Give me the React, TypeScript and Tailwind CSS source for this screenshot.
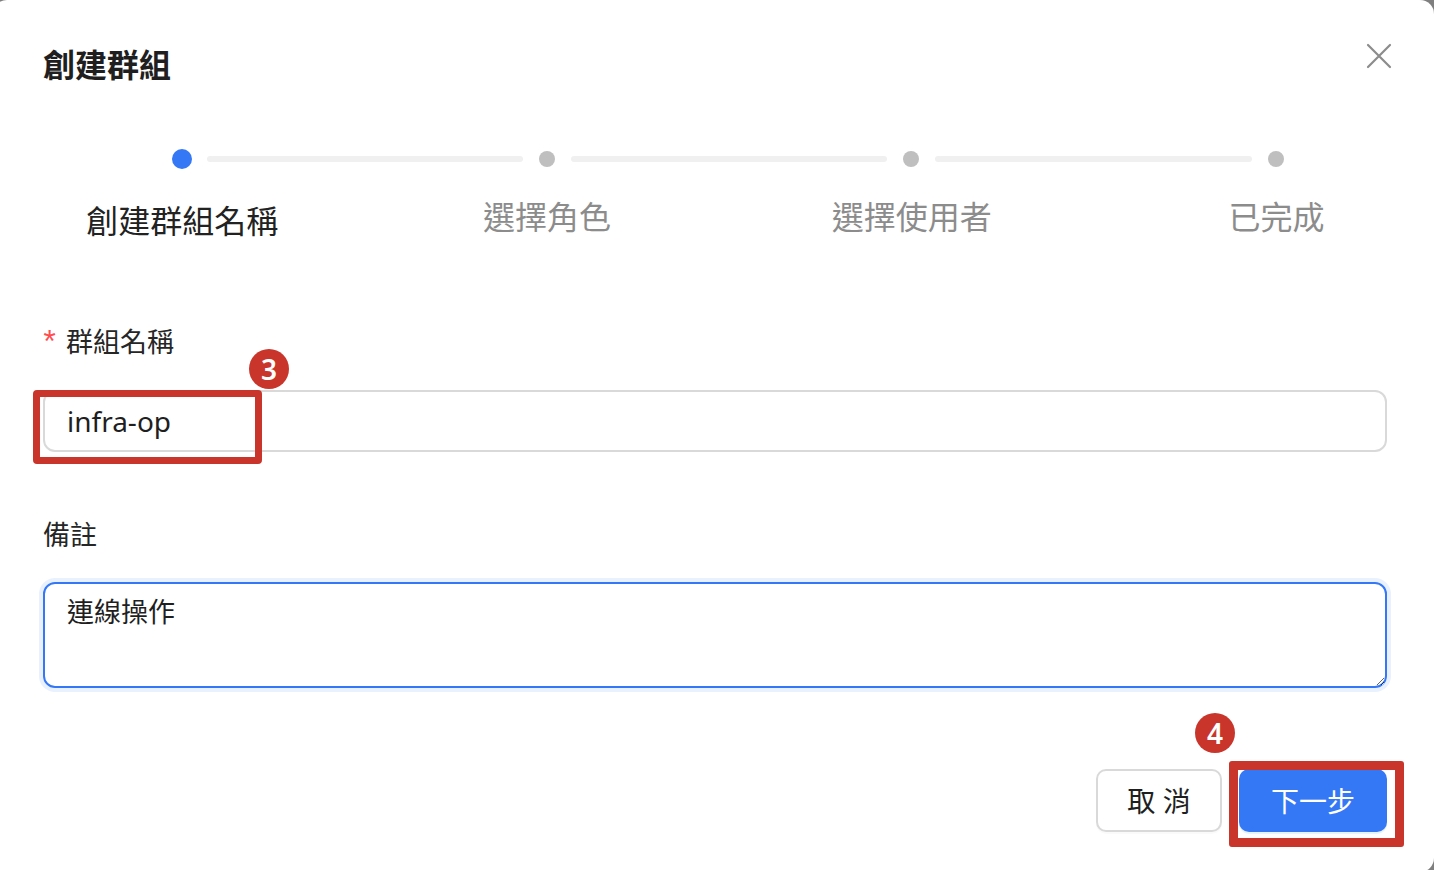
import React from 'react';

const steps = ['創建群組名稱', '選擇角色', '選擇使用者', '已完成'];

const font = { fontFamily: '"Noto Sans", "Noto Sans CJK TC", sans-serif' };

const App = () => {
  return (
    <div className="relative w-[1434px] h-[870px] overflow-hidden bg-[#7f7f7f]" style={font}>
      {/* Modal */}
      <div className="ml-[-7px] w-[1441px] h-[872px] bg-white rounded-[14px] pl-[50px] pr-[47px]">
        {/* Header */}
        <div className="pt-[43px] flex justify-between items-start">
          <h2 className="mt-[2px] text-[32px] leading-[40px] font-bold text-[#1f1f1f]">創建群組</h2>
          <button className="mr-[-5px] w-[26px] h-[26px] text-[#8c8c8c]">
            <svg viewBox="0 0 26 26" width="26" height="26" fill="none" stroke="currentColor" strokeWidth="2.2" strokeLinecap="round">
              <path d="M2 2L24 24M24 2L2 24" />
            </svg>
          </button>
        </div>

        {/* Steps */}
        <div className="mt-[64px] ml-[129px] h-[20px] flex items-center">
          <span className="w-[20px] h-[20px] rounded-full bg-[#3478f6]" />
          <span className="ml-[15px] w-[316px] h-[6px] rounded-full bg-[#f0f0f0]" />
          <span className="ml-[16px] w-[16px] h-[16px] rounded-full bg-[#bfbfbf]" />
          <span className="ml-[16px] w-[316px] h-[6px] rounded-full bg-[#f0f0f0]" />
          <span className="ml-[16px] w-[16px] h-[16px] rounded-full bg-[#bfbfbf]" />
          <span className="ml-[16px] w-[317px] h-[6px] rounded-full bg-[#f0f0f0]" />
          <span className="ml-[16px] w-[16px] h-[16px] rounded-full bg-[#bfbfbf]" />
        </div>
        <div className="mt-[28px] ml-[-43px] w-[1459px] h-[44px] grid grid-cols-4">
          {steps.map((s, i) => (
            <div
              key={s}
              className={
                i === 0
                  ? 'pt-[4px] text-center text-[32px] leading-[40px] text-[#222222]'
                  : 'text-center text-[32px] leading-[40px] text-[#8c8c8c]'
              }
            >
              {s}
            </div>
          ))}
        </div>

        {/* Group name */}
        <div className="mt-[83px] h-[36px] flex items-start text-[27px] leading-[36px] text-[#262626]">
          <span className="mt-[5px] ml-[-3px] w-[26px] text-[#ff4d4f] text-[32px] leading-none" style={{ fontFamily: '"Liberation Mono", monospace' }}>*</span>
          <span>群組名稱</span>
        </div>
        <input
          readOnly
          value="infra-op"
          className="mt-[30px] block w-full h-[62px] border-2 border-[#d9d9d9] rounded-[12px] px-[22px] text-[28px] text-[#1f1f1f] outline-none"
        />

        {/* Remark */}
        <div className="mt-[65px] text-[27px] leading-[36px] text-[#262626]">備註</div>
        <textarea
          readOnly
          value="連線操作"
          className="mt-[29px] block w-full h-[106px] border-2 border-[#3478f6] rounded-[12px] px-[22px] pt-[10px] text-[27px] leading-[36px] text-[#1f1f1f] outline-none shadow-[0_0_0_4px_#e9f1ff]"
        />

        {/* Footer */}
        <div className="mt-[81px] flex justify-end gap-[17px]">
          <button className="w-[126px] h-[63px] border-2 border-[#d9d9d9] rounded-[10px] bg-white text-[28px] text-[#1f1f1f] shadow-[0_2px_0_rgba(0,0,0,0.02)]">
            取 消
          </button>
          <button className="w-[148px] h-[63px] rounded-[10px] bg-[#3478f6] text-[28px] text-white shadow-[0_2px_0_rgba(5,145,255,0.1)]">
            下一步
          </button>
        </div>
      </div>

      {/* Annotations */}
      <div className="absolute left-[33px] top-[390px] w-[229px] h-[74px] border-[7px] border-[#c9352b] rounded-[4px]" />
      <div className="absolute left-[249px] top-[349px] w-[40px] h-[40px] rounded-full bg-[#c9352b] text-white flex items-center justify-center text-[28px] font-semibold leading-none">
        3
      </div>
      <div className="absolute left-[1229px] top-[761px] w-[175px] h-[86px] border-[9px] border-[#c9352b] rounded-[3px]" />
      <div className="absolute left-[1195px] top-[713px] w-[40px] h-[40px] rounded-full bg-[#c9352b] text-white flex items-center justify-center text-[28px] font-semibold leading-none">
        4
      </div>
    </div>
  );
};

export default App;
